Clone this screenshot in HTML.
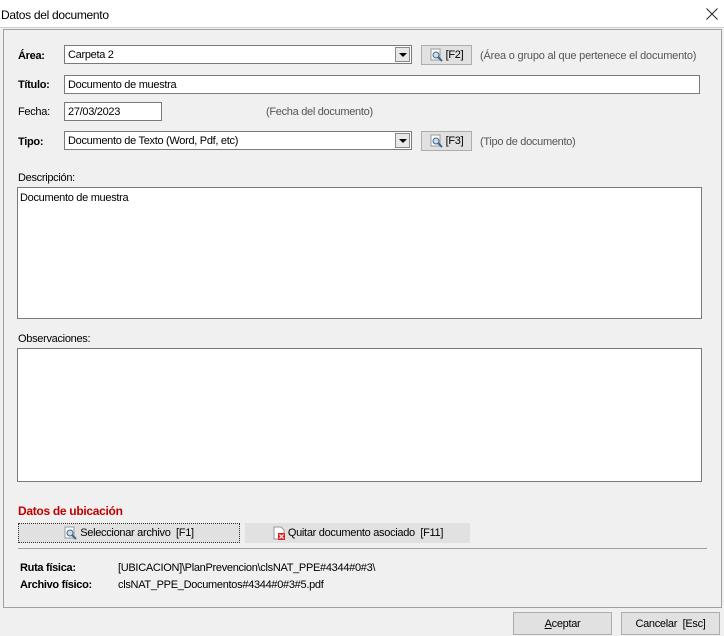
<!DOCTYPE html>
<html><head><meta charset="utf-8"><style>
*{box-sizing:border-box;margin:0;padding:0}
body{width:724px;height:636px;background:#f0f0f0;font-family:"Liberation Sans",sans-serif;font-size:11px;color:#000;position:relative;overflow:hidden;letter-spacing:-0.3px}
.a{position:absolute;white-space:nowrap}
.tb{left:0;top:0;width:724px;height:28px;background:#fff;border-bottom:1px solid #cfcfcf}
.panel{left:3px;top:29px;width:719px;height:579px;border:1px solid #a0a0a0;background:#f0f0f0}
.in{background:#fff;border:1px solid #7a7a7a;height:19px;line-height:18px;padding-left:3px}
b{font-weight:bold}
.dd{position:absolute;right:1px;top:1px;width:15px;height:15px;background:#e8e8e8;border:1px solid #888}
.dd:after{content:"";position:absolute;left:3px;top:5px;border-left:4px solid transparent;border-right:4px solid transparent;border-top:4px solid #000}
.btn{background:#e1e1e1;border:1px solid #adadad;text-align:center}
.hint{color:#555}
.ta{background:#fff;border:1px solid #7a7a7a;padding:4px 2px}
.mag{display:inline-block;width:14px;height:14px;vertical-align:middle;margin-right:2px}
</style></head><body>
<div class="a tb"></div>
<div class="a" style="left:1px;top:8px;font-size:12px">Datos del documento</div>
<svg class="a" style="left:706px;top:8px" width="12" height="12" viewBox="0 0 12 12"><path d="M0.5 0.5L11.5 11.5M11.5 0.5L0.5 11.5" stroke="#222" stroke-width="1"/></svg>
<div class="a panel"></div>

<div class="a" style="left:18px;top:50px"><b>Área:</b></div>
<div class="a in" style="left:64px;top:45px;width:348px">Carpeta 2<div class="dd"></div></div>
<div class="a btn" style="left:421px;top:45px;width:51px;height:20px;line-height:18px"><svg class="mag" viewBox="0 0 14 14"><rect x="1" y="1" width="9" height="11" fill="#fff" stroke="#999"/><circle cx="6" cy="7" r="3" fill="#cde" stroke="#468"/><line x1="8" y1="9" x2="12" y2="13" stroke="#468" stroke-width="2"/></svg>[F2]</div>
<div class="a hint" style="left:480px;top:50px;letter-spacing:-0.2px">(Área o grupo al que pertenece el documento)</div>

<div class="a" style="left:18px;top:79px"><b>Título:</b></div>
<div class="a in" style="left:64px;top:75px;width:636px">Documento de muestra</div>

<div class="a" style="left:18px;top:106px">Fecha:</div>
<div class="a in" style="left:64px;top:102px;width:98px">27/03/2023</div>
<div class="a hint" style="left:266px;top:106px">(Fecha del documento)</div>

<div class="a" style="left:18px;top:136px"><b>Tipo:</b></div>
<div class="a in" style="left:64px;top:131px;width:348px">Documento de Texto (Word, Pdf, etc)<div class="dd"></div></div>
<div class="a btn" style="left:421px;top:131px;width:51px;height:20px;line-height:18px"><svg class="mag" viewBox="0 0 14 14"><rect x="1" y="1" width="9" height="11" fill="#fff" stroke="#999"/><circle cx="6" cy="7" r="3" fill="#cde" stroke="#468"/><line x1="8" y1="9" x2="12" y2="13" stroke="#468" stroke-width="2"/></svg>[F3]</div>
<div class="a hint" style="left:480px;top:136px">(Tipo de documento)</div>

<div class="a" style="left:18px;top:172px">Descripción:</div>
<div class="a ta" style="left:17px;top:187px;width:685px;height:132px">Documento de muestra</div>
<div class="a" style="left:18px;top:333px">Observaciones:</div>
<div class="a ta" style="left:17px;top:348px;width:685px;height:134px"></div>

<div class="a" style="left:18px;top:504px;color:#c00000;font-size:12px"><b>Datos de ubicación</b></div>
<div class="a" style="left:18px;top:523px;width:222px;height:20px;background:#e1e1e1;border:1px dotted #333;text-align:center;line-height:18px"><svg class="mag" viewBox="0 0 14 14"><rect x="1" y="1" width="9" height="11" fill="#fff" stroke="#999"/><circle cx="6" cy="7" r="3" fill="#cde" stroke="#468"/><line x1="8" y1="9" x2="12" y2="13" stroke="#468" stroke-width="2"/></svg>Seleccionar archivo&nbsp; [F1]</div>
<div class="a" style="left:245px;top:523px;width:225px;height:20px;background:#e1e1e1;text-align:center;line-height:20px"><svg class="mag" viewBox="0 0 14 14"><path d="M2 1h7l3 3v9H2z" fill="#fff" stroke="#999"/><rect x="6" y="7" width="7" height="7" fill="#d22"/><path d="M7.5 8.5l4 4M11.5 8.5l-4 4" stroke="#fff" stroke-width="1.2"/></svg>Quitar documento asociado&nbsp; [F11]</div>
<div class="a" style="left:18px;top:548px;width:689px;height:1px;background:#a0a0a0"></div>

<div class="a" style="left:20px;top:562px"><b>Ruta física:</b></div>
<div class="a" style="left:118px;top:562px">[UBICACION]\PlanPrevencion\clsNAT_PPE#4344#0#3\</div>
<div class="a" style="left:20px;top:579px"><b>Archivo físico:</b></div>
<div class="a" style="left:118px;top:579px">clsNAT_PPE_Documentos#4344#0#3#5.pdf</div>

<div class="a btn" style="left:513px;top:612px;width:99px;height:23px;line-height:22px"><u>A</u>ceptar</div>
<div class="a btn" style="left:621px;top:612px;width:99px;height:23px;line-height:22px">Cancelar&nbsp; [Esc]</div>
</body></html>
